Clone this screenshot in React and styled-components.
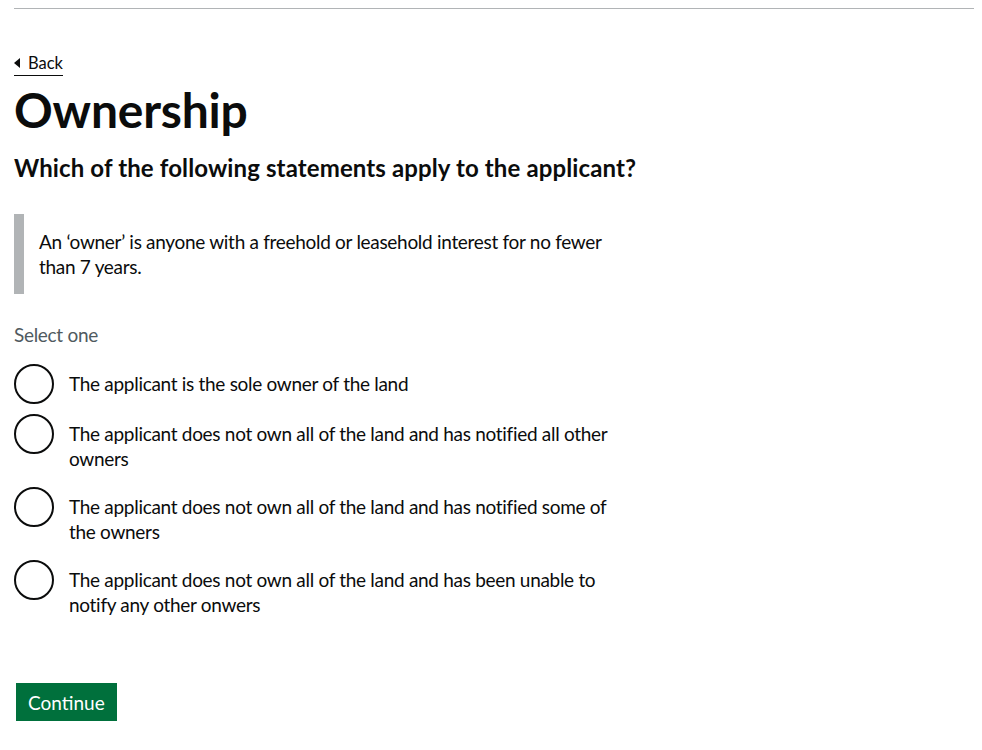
import styled, { createGlobalStyle } from "styled-components";

const GlobalStyle = createGlobalStyle`
  body {
    margin: 0;
    background: #fff;
    color: #0b0c0c;
    font-family: Lato, "Liberation Sans", Arial, sans-serif;
  }
`;

const Page = styled.div`
  margin: 0 8px 0 14px;
  padding-top: 8px;
`;

const Rule = styled.div`
  border-top: 1px solid #b1b4b6;
  width: 960px;
`;

const Main = styled.main`
  width: 640px;
  padding-top: 43px;
`;

const BackLink = styled.a`
  display: inline-flex;
  align-items: center;
  gap: 8px;
  font-size: 16.5px;
  line-height: 20px;
  color: #0b0c0c;
  text-decoration: none;
  border-bottom: 1px solid #0b0c0c;
  padding-bottom: 2px;
  &::before {
    content: "";
    width: 0;
    height: 0;
    border-top: 5px solid transparent;
    border-bottom: 5px solid transparent;
    border-right: 6px solid #0b0c0c;
  }
`;

const Title = styled.h1`
  font-size: 48px;
  font-weight: 700;
  line-height: 50px;
  margin: 9px 0 18px;
  letter-spacing: -0.2px;
`;

const Question = styled.h2`
  font-size: 24px;
  font-weight: 700;
  line-height: 30px;
  margin: 0 0 31px;
  white-space: nowrap;
  letter-spacing: 0.12px;
`;

const Inset = styled.div`
  border-left: 10px solid #b1b4b6;
  padding: 15px 0 15px 15px;
  font-size: 19px;
  line-height: 25px;
  letter-spacing: -0.3px;
  margin-bottom: 28px;
  max-width: 600px;
`;

const Hint = styled.div`
  color: #505a5f;
  font-size: 19px;
  line-height: 25px;
  letter-spacing: -0.3px;
  margin-bottom: 17px;
`;

const Options = styled.div`
  display: flex;
  flex-direction: column;
  gap: 10px;
  margin-bottom: 60px;
`;

const Option = styled.label`
  display: flex;
  align-items: flex-start;
  gap: 15px;
  cursor: pointer;
`;

const Circle = styled.span`
  flex: none;
  width: 40px;
  height: 40px;
  box-sizing: border-box;
  border: 2px solid #0b0c0c;
  border-radius: 50%;
`;

const OptionText = styled.span`
  font-size: 19px;
  line-height: 25px;
  letter-spacing: -0.3px;
  padding: 7px 0 6px;
  max-width: 555px;
`;

const Button = styled.button`
  font-family: inherit;
  font-size: 19px;
  line-height: 19px;
  color: #fff;
  background: #00703c;
  border: 0;
  border-radius: 0;
  padding: 10px 12px 9px;
  margin-left: 2px;
  box-shadow: 0 2px 0 #002d18;
  cursor: pointer;
`;

const options = [
  "The applicant is the sole owner of the land",
  "The applicant does not own all of the land and has notified all other owners",
  "The applicant does not own all of the land and has notified some of the owners",
  "The applicant does not own all of the land and has been unable to notify any other onwers",
];

export default function App() {
  return (
    <>
      <GlobalStyle />
      <Page>
        <Rule />
        <Main>
          <BackLink href="#">Back</BackLink>
          <Title>Ownership</Title>
          <Question>Which of the following statements apply to the applicant?</Question>
          <Inset>
            An ‘owner’ is anyone with a freehold or leasehold interest for no fewer than 7 years.
          </Inset>
          <Hint>Select one</Hint>
          <Options>
            {options.map((o) => (
              <Option key={o}>
                <Circle />
                <OptionText>{o}</OptionText>
              </Option>
            ))}
          </Options>
          <Button>Continue</Button>
        </Main>
      </Page>
    </>
  );
}
